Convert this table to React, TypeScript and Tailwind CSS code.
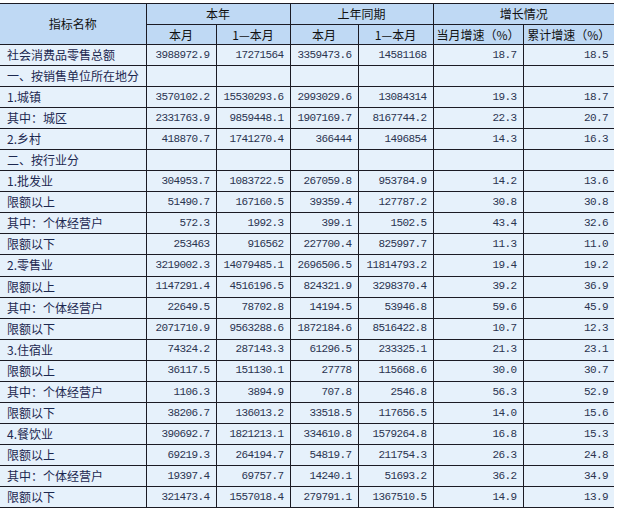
import React from "react"

type Row = [string, string, string, string, string, string, string]

const rows: Row[] = [
  ["社会消费品零售总额", "3988972.9", "17271564", "3359473.6", "14581168", "18.7", "18.5"],
  ["一、按销售单位所在地分", "", "", "", "", "", ""],
  ["1.城镇", "3570102.2", "15530293.6", "2993029.6", "13084314", "19.3", "18.7"],
  ["其中：城区", "2331763.9", "9859448.1", "1907169.7", "8167744.2", "22.3", "20.7"],
  ["2.乡村", "418870.7", "1741270.4", "366444", "1496854", "14.3", "16.3"],
  ["二、按行业分", "", "", "", "", "", ""],
  ["1.批发业", "304953.7", "1083722.5", "267059.8", "953784.9", "14.2", "13.6"],
  ["限额以上", "51490.7", "167160.5", "39359.4", "127787.2", "30.8", "30.8"],
  ["其中：个体经营户", "572.3", "1992.3", "399.1", "1502.5", "43.4", "32.6"],
  ["限额以下", "253463", "916562", "227700.4", "825997.7", "11.3", "11.0"],
  ["2.零售业", "3219002.3", "14079485.1", "2696506.5", "11814793.2", "19.4", "19.2"],
  ["限额以上", "1147291.4", "4516196.5", "824321.9", "3298370.4", "39.2", "36.9"],
  ["其中：个体经营户", "22649.5", "78702.8", "14194.5", "53946.8", "59.6", "45.9"],
  ["限额以下", "2071710.9", "9563288.6", "1872184.6", "8516422.8", "10.7", "12.3"],
  ["3.住宿业", "74324.2", "287143.3", "61296.5", "233325.1", "21.3", "23.1"],
  ["限额以上", "36117.5", "151130.1", "27778", "115668.6", "30.0", "30.7"],
  ["其中：个体经营户", "1106.3", "3894.9", "707.8", "2546.8", "56.3", "52.9"],
  ["限额以下", "38206.7", "136013.2", "33518.5", "117656.5", "14.0", "15.6"],
  ["4.餐饮业", "390692.7", "1821213.1", "334610.8", "1579264.8", "16.8", "15.3"],
  ["限额以上", "69219.3", "264194.7", "54819.7", "211754.3", "26.3", "24.8"],
  ["其中：个体经营户", "19397.4", "69757.7", "14240.1", "51693.2", "36.2", "34.9"],
  ["限额以下", "321473.4", "1557018.4", "279791.1", "1367510.5", "14.9", "13.9"],
]

const cjk = "font-['SimSun','Noto_Sans_CJK_SC',sans-serif]"
const num = "font-['Liberation_Mono','Noto_Sans_CJK_SC',monospace] text-[11px] tracking-[-0.6px]"

export default function App() {
  return (
    <div className="bg-white w-[618px] h-[512px] pt-[3px]">
      <table className={`w-[614px] table-fixed border-collapse text-[12px] ${cjk}`}>
        <colgroup>
          <col className="w-[146px]" />
          <col className="w-[70px]" />
          <col className="w-[74px]" />
          <col className="w-[68px]" />
          <col className="w-[75px]" />
          <col className="w-[90px]" />
          <col className="w-[91px]" />
        </colgroup>
        <thead className="bg-[#bfd9f4] text-[#111]">
          <tr className="h-[21px]">
            <th rowSpan={2} className="border-y border-r border-[#1b1b24] font-normal text-center">指标名称</th>
            <th colSpan={2} className="border border-[#1b1b24] font-normal text-center">本年</th>
            <th colSpan={2} className="border border-[#1b1b24] font-normal text-center">上年同期</th>
            <th colSpan={2} className="border-y border-l border-[#1b1b24] font-normal text-center">增长情况</th>
          </tr>
          <tr className="h-[20px]">
            <th className="border border-[#1b1b24] font-normal text-center">本月</th>
            <th className="border border-[#1b1b24] font-normal text-center">1—本月</th>
            <th className="border border-[#1b1b24] font-normal text-center">本月</th>
            <th className="border border-[#1b1b24] font-normal text-center">1—本月</th>
            <th className="border border-[#1b1b24] font-normal text-center whitespace-nowrap">当月增速（%）</th>
            <th className="border-y border-l border-[#1b1b24] font-normal text-center whitespace-nowrap">累计增速（%）</th>
          </tr>
        </thead>
        <tbody className="bg-[#e6f1fb]">
          {rows.map((r, i) => (
            <tr key={i} className="h-[21.05px]">
              <td className="border-y border-r border-[#1b1b24] pl-[7px] text-[#1c2850] whitespace-nowrap">{r[0]}</td>
              {r.slice(1).map((v, j) => (
                <td
                  key={j}
                  className={`border-y border-[#1b1b24] pr-[6px] text-right text-[#2b3450] ${num} ${j < 5 ? "border-r" : ""}`}
                >
                  {v}
                </td>
              ))}
            </tr>
          ))}
        </tbody>
      </table>
    </div>
  )
}
